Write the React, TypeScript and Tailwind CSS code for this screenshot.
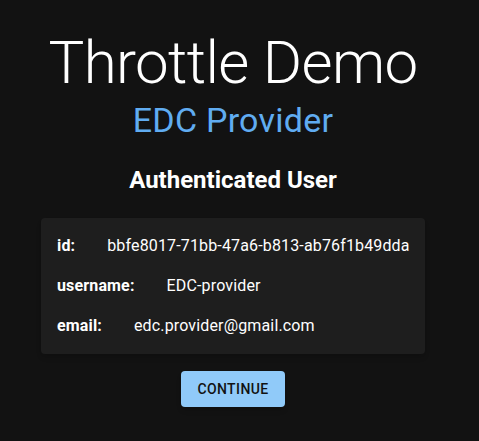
import React from 'react';

const user = {
  id: 'bbfe8017-71bb-47a6-b813-ab76f1b49dda',
  username: 'EDC-provider',
  email: 'edc.provider@gmail.com',
};

const rows: [string, string][] = [
  ['id', user.id],
  ['username', user.username],
  ['email', user.email],
];

export default function App() {
  return (
    <div
      className="min-h-screen w-full bg-[#121212] text-white flex flex-col items-center pt-[27px] pr-[13px]"
      style={{ fontFamily: 'Roboto, "Noto Sans", sans-serif' }}
    >
      <h1 className="text-[60px] leading-[72px] font-light tracking-[-0.6px]">Throttle Demo</h1>
      <h2 className="text-[34px] leading-[42px] font-normal text-[#60acf1] tracking-[0.25px]">EDC Provider</h2>
      <h3 className="mt-[23px] text-[24px] leading-[32px] font-bold">Authenticated User</h3>

      <div className="mt-[22px] w-[384px] bg-[#1e1e1e] rounded py-2 px-4 shadow-md">
        {rows.map(([label, value]) => (
          <div key={label} className="h-10 flex items-center whitespace-nowrap text-[16px] leading-6 tracking-[0.15px]">
            <span className="font-bold mr-8">{label}:</span>
            <span>{value}</span>
          </div>
        ))}
      </div>

      <button
        type="button"
        className="mt-[17px] h-9 px-4 rounded bg-[#90caf9] text-[#121212] text-[14px] font-medium uppercase tracking-[0.4px] shadow-md"
      >
        Continue
      </button>
    </div>
  );
}
